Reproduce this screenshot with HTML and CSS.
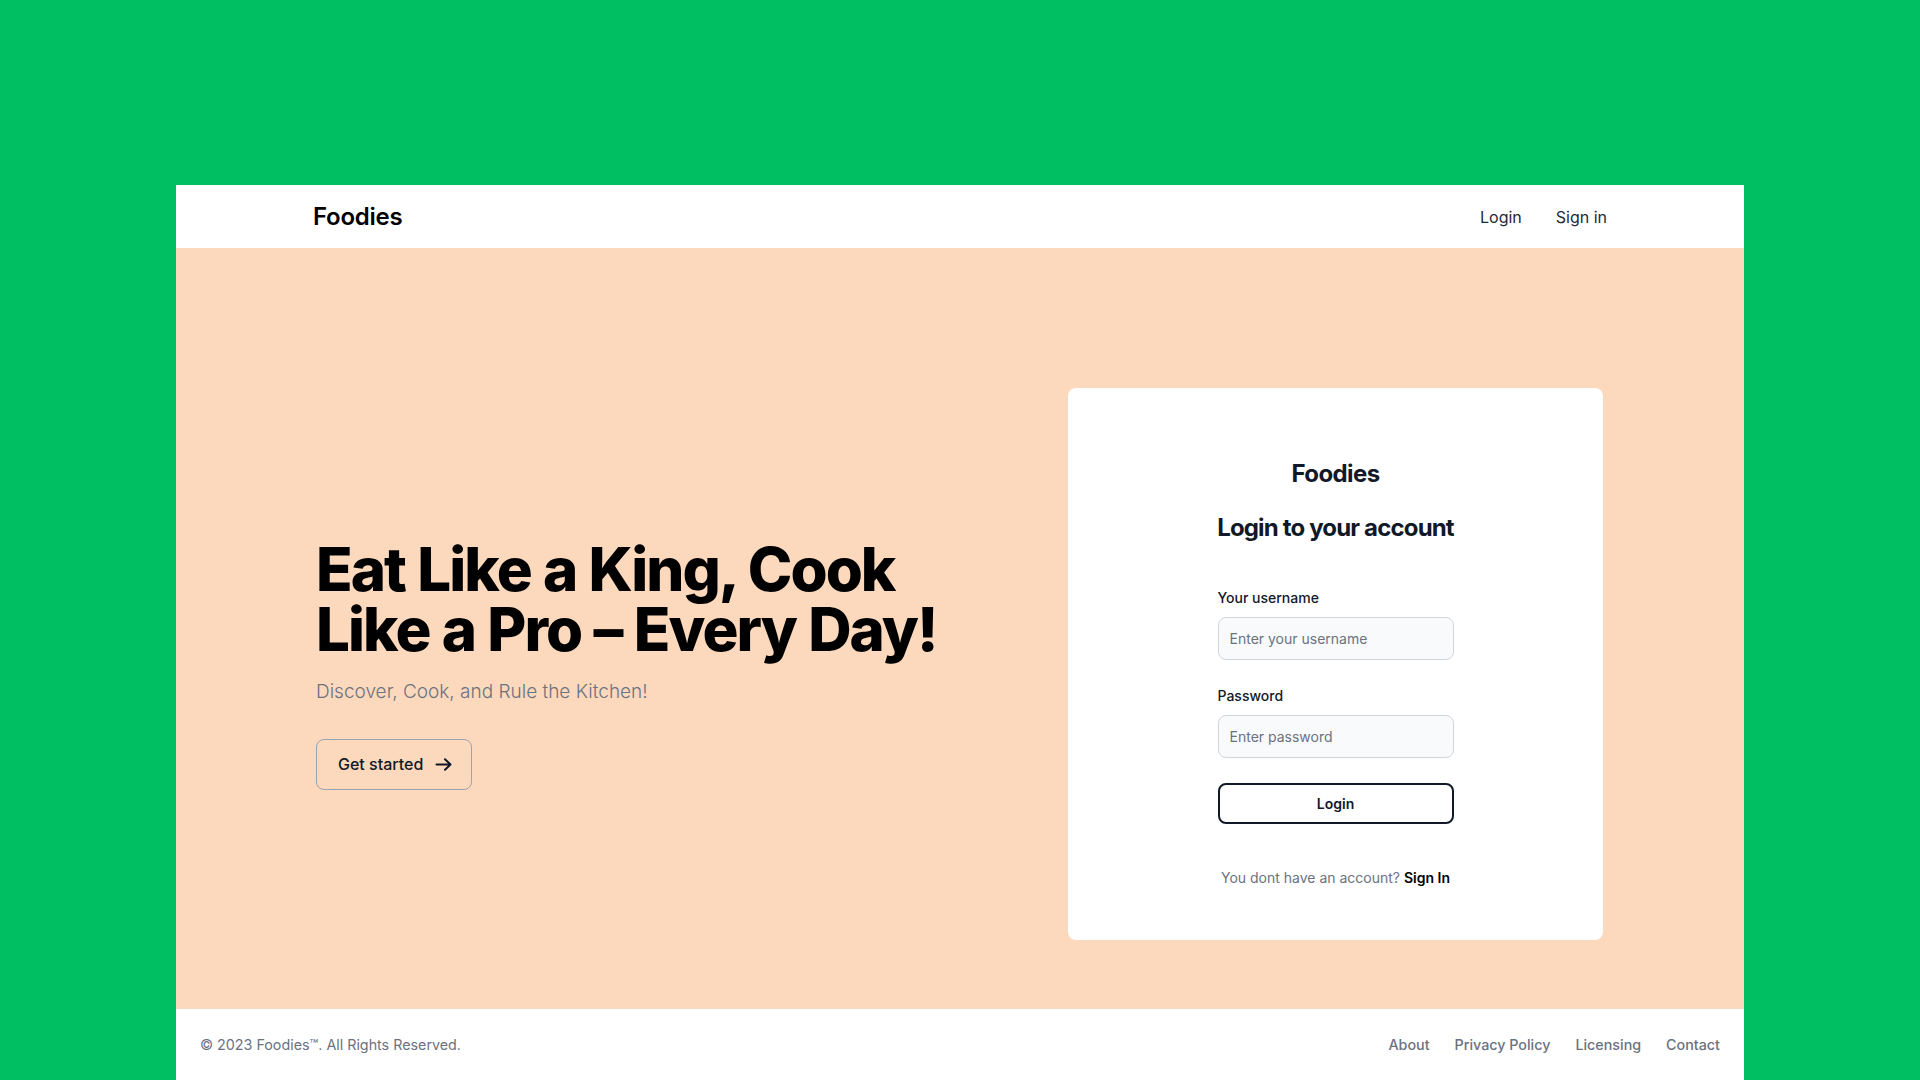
FILE: index.html
```html
<!DOCTYPE html>
<html lang="en">
<head>
<meta charset="utf-8">
<title>Foodies</title>
<link rel="stylesheet" href="styles.css">
</head>
<body>
<div class="frame">
  <header class="topbar">
    <div class="topbar-inner">
      <a class="brand" href="#">Foodies</a>
      <nav class="nav">
        <a href="#">Login</a>
        <a href="#">Sign in</a>
      </nav>
    </div>
  </header>

  <section class="hero">
    <div class="hero-text">
      <h1 class="hero-title">Eat Like a King, Cook Like a Pro – Every Day!</h1>
      <p class="hero-sub">Discover, Cook, and Rule the Kitchen!</p>
      <a class="btn-start" href="#">Get started
        <svg class="arrow" width="17" height="13" viewBox="0 0 17 13" fill="none" stroke="currentColor" stroke-width="2" stroke-linecap="round" stroke-linejoin="round"><path d="M1.5 6.5h14M10 1.2l5.5 5.3-5.5 5.3"/></svg>
      </a>
    </div>

    <div class="card">
      <div class="card-inner">
        <div class="card-brand">Foodies</div>
        <h2 class="card-title">Login to your account</h2>
        <form class="form">
          <label class="label" for="u">Your username</label>
          <input class="input" id="u" type="text" placeholder="Enter your username">
          <label class="label label-second" for="p">Password</label>
          <input class="input" id="p" type="password" placeholder="Enter password">
          <button class="btn-login" type="button">Login</button>
        </form>
        <p class="signup">You dont have an account? <a href="#">Sign In</a></p>
      </div>
    </div>
  </section>

  <footer class="footer">
    <span class="copy">© 2023 Foodies™. All Rights Reserved.</span>
    <ul class="footer-links">
      <li><a href="#">About</a></li>
      <li><a href="#">Privacy Policy</a></li>
      <li><a href="#">Licensing</a></li>
      <li><a href="#">Contact</a></li>
    </ul>
  </footer>
</div>
</body>
</html>
```

FILE: styles.css
```css
* { box-sizing: border-box; }

html, body {
  margin: 0;
  padding: 0;
}

body {
  background: #00bf63;
  font-family: Inter, "Noto Sans", "Liberation Sans", sans-serif;
  color: #111827;
  height: 1080px;
  overflow: hidden;
}

a { text-decoration: none; color: inherit; }

.frame {
  width: 1568px;
  margin: 185px auto 0;
  background: #ffffff;
}

/* Header */
.topbar {
  height: 63px;
  background: #ffffff;
}

.topbar-inner {
  width: 1294px;
  height: 100%;
  margin: 0 auto;
  display: flex;
  align-items: center;
  justify-content: space-between;
}

.brand {
  font-size: 24px;
  font-weight: 600;
  letter-spacing: -0.01em;
  color: #000000;
  line-height: 30px;
}

.nav {
  display: flex;
  gap: 34px;
  font-size: 16px;
  line-height: 22px;
  color: #1f2937;
}

/* Hero */
.hero {
  background: #fcd9bc;
  height: 761px;
  padding: 140px 141px 69px 140px;
  display: flex;
  align-items: center;
  justify-content: space-between;
}

.hero-text {
  display: flex;
  flex-direction: column;
  align-items: flex-start;
}

.hero-title {
  margin: 0 0 19px;
  max-width: 672px;
  font-size: 60px;
  line-height: 60px;
  font-weight: 800;
  letter-spacing: -0.032em;
  word-spacing: 1px;
  color: #000000;
}

.hero-sub {
  margin: 0 0 33px;
  font-size: 19px;
  line-height: 28px;
  font-weight: 300;
  color: #6b7280;
}

.btn-start {
  display: inline-flex;
  align-items: center;
  height: 51px;
  padding: 0 19px 0 21px;
  border: 1px solid #9ca3af;
  border-radius: 8px;
  font-size: 16px;
  font-weight: 500;
  color: #111827;
}

.arrow {
  margin-left: 12px;
  display: block;
}

/* Card */
.card {
  width: 535px;
  background: #ffffff;
  border-radius: 8px;
  padding: 70px 0 52px;
}

.card-inner {
  width: 236px;
  margin: 0 auto;
  display: flex;
  flex-direction: column;
  align-items: stretch;
}

.card-brand {
  text-align: center;
  font-size: 24px;
  line-height: 32px;
  font-weight: 700;
  letter-spacing: -0.025em;
  color: #111827;
}

.card-title {
  margin: 22px -10px 44px;
  text-align: center;
  font-size: 24px;
  line-height: 32px;
  font-weight: 700;
  letter-spacing: -0.035em;
  color: #111827;
  white-space: nowrap;
}

.form {
  display: flex;
  flex-direction: column;
}

.label {
  font-size: 14px;
  line-height: 20px;
  font-weight: 500;
  color: #111827;
  margin-bottom: 9px;
}

.label-second {
  margin-top: 26px;
}

.input {
  height: 43px;
  width: 100%;
  padding: 0 11px;
  font-family: inherit;
  font-size: 14px;
  color: #111827;
  background: #f9fafb;
  border: 1px solid #d1d5db;
  border-radius: 8px;
  outline: none;
}

.input::placeholder {
  color: #6b7280;
}

.btn-login {
  margin-top: 25px;
  height: 41px;
  width: 100%;
  font-family: inherit;
  font-size: 14px;
  font-weight: 600;
  color: #111827;
  background: #ffffff;
  border: 2px solid #111827;
  border-radius: 8px;
}

.signup {
  margin: 44px -10px 0;
  text-align: center;
  font-size: 14px;
  line-height: 20px;
  color: #6b7280;
  white-space: nowrap;
}

.signup a {
  color: #000000;
  font-weight: 600;
}

/* Footer */
.footer {
  background: #ffffff;
  padding: 26px 24px;
  display: flex;
  align-items: center;
  justify-content: space-between;
  font-size: 14.3px;
  line-height: 20px;
  color: #6b7280;
}

.footer-links {
  list-style: none;
  margin: 0;
  padding: 0;
  display: flex;
  gap: 25px;
  font-weight: 500;
}
```
